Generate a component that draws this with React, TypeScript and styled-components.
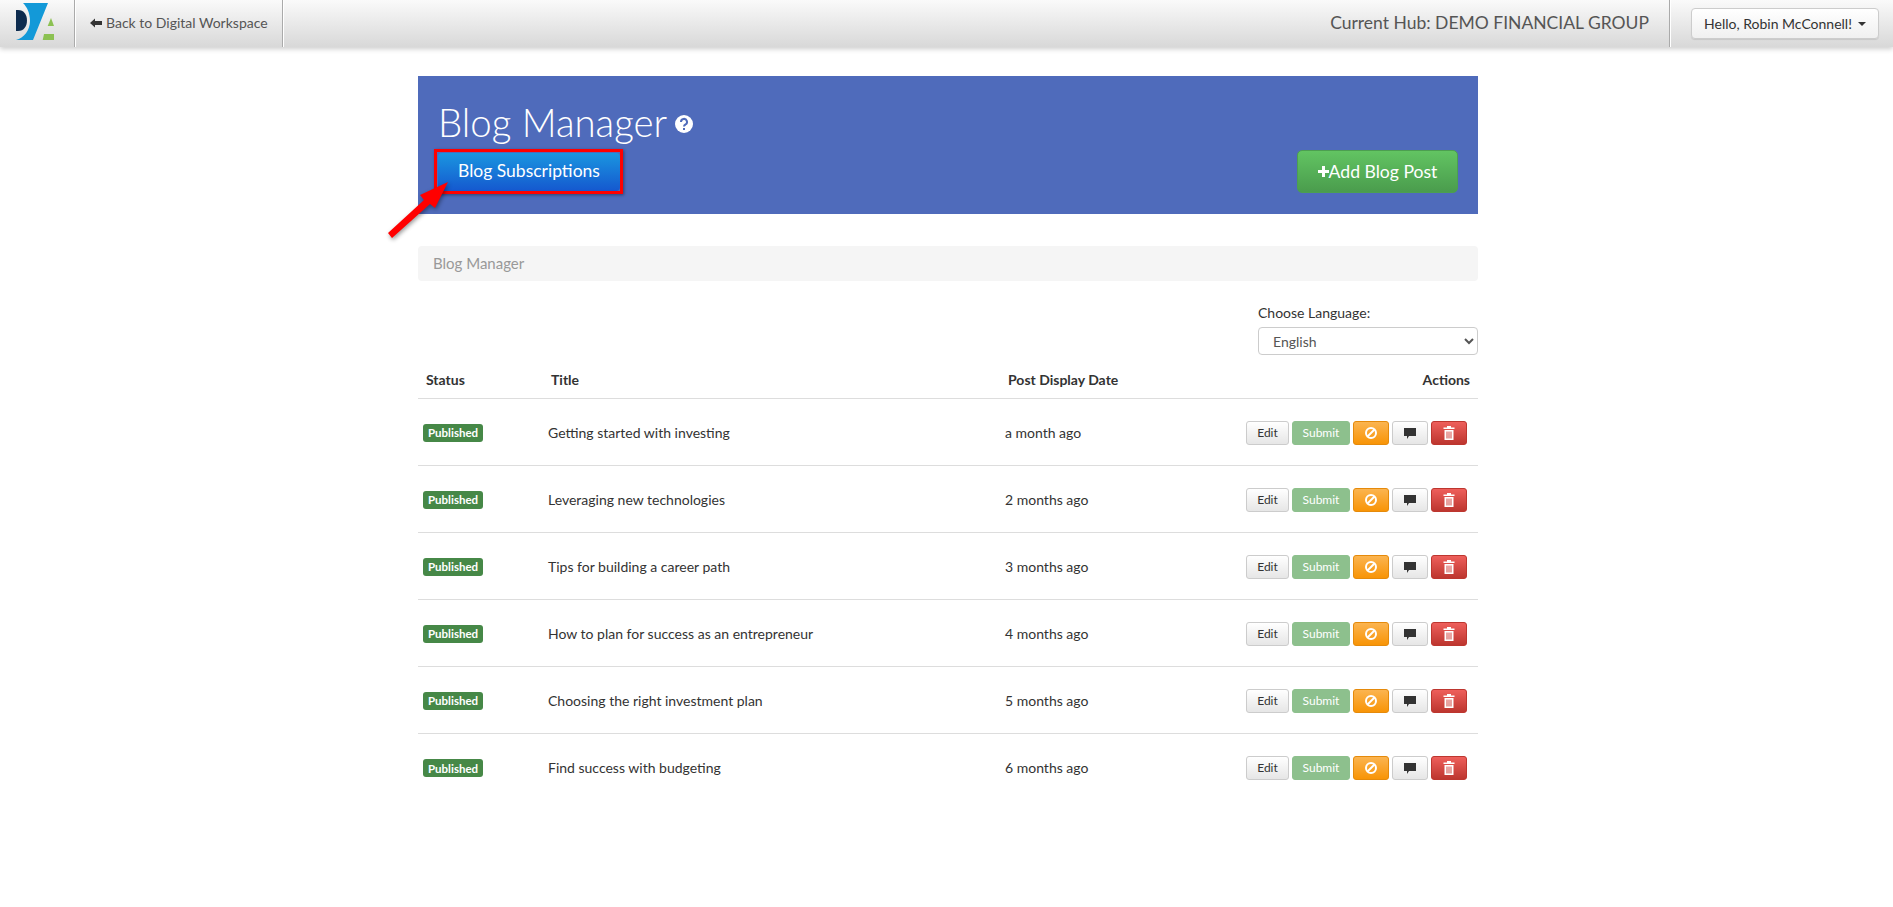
import styled, { createGlobalStyle } from "styled-components";

const GlobalStyle = createGlobalStyle`
  html, body {
    margin: 0;
    padding: 0;
    background: #fff;
    font-family: Lato, "Liberation Sans", sans-serif;
    color: #333;
  }
  * { box-sizing: border-box; }
`;

const TopBar = styled.header`
  height: 47px;
  display: flex;
  align-items: stretch;
  background: linear-gradient(to bottom, #fafafa, #d8d8d8);
  box-shadow: 0 2px 5px rgba(0, 0, 0, 0.2);
`;

const LogoCell = styled.div`
  width: 75px;
  padding: 3px 0 0 16px;
  border-right: 1px solid #aaa;
  box-shadow: 1px 0 0 #fff;
`;

const BackLink = styled.a`
  width: 208px;
  display: flex;
  align-items: center;
  gap: 4px;
  padding: 0 0 2px 15px;
  font-size: 14px;
  color: #555;
  border-right: 1px solid #aaa;
  box-shadow: 1px 0 0 #fff;
`;

const HubName = styled.div`
  margin-left: auto;
  display: flex;
  align-items: center;
  padding: 0 20px 3px 0;
  font-size: 17.5px;
  color: #555;
`;

const UserCell = styled.div`
  width: 224px;
  display: flex;
  align-items: flex-start;
  padding: 8px 0 0 21px;
  border-left: 1px solid #aaa;
  box-shadow: inset 1px 0 0 #fff;
`;

const UserButton = styled.button`
  width: 188px;
  height: 31px;
  display: flex;
  align-items: center;
  justify-content: center;
  gap: 6px;
  white-space: nowrap;
  font: 14px Lato, sans-serif;
  color: #333;
  background: linear-gradient(to bottom, #fff, #f0f0f0);
  border: 1px solid #ccc;
  border-radius: 4px;
  box-shadow: 0 1px 1px rgba(0, 0, 0, 0.1);
`;

const Caret = styled.span`
  width: 0;
  height: 0;
  border-left: 4px solid transparent;
  border-right: 4px solid transparent;
  border-top: 4px solid #333;
`;

const Main = styled.main`
  position: relative;
  width: 1060px;
  margin: 29px 0 0 418px;
`;

const Hero = styled.section`
  height: 138px;
  display: flex;
  justify-content: space-between;
  background: #4f6bbb;
  padding: 25px 20px 0 20px;
`;

const HeroLeft = styled.div`
  display: flex;
  flex-direction: column;
`;

const HeroTitle = styled.h1`
  margin: 0;
  display: flex;
  align-items: center;
  gap: 8px;
  font-size: 38.4px;
  line-height: 43px;
  font-weight: 300;
  color: #fff;
`;

const HelpIcon = styled.svg`
  width: 18px;
  height: 18px;
  margin-top: 2px;
`;

const SubscriptionsButton = styled.button`
  width: 182px;
  height: 38px;
  margin-top: 9px;
  padding: 0 0 4px;
  font: 17.5px Lato, sans-serif;
  color: #fff;
  background: linear-gradient(to bottom, #1a96e0, #1558cf);
  border: none;
  border-radius: 4px;
`;

const Highlight = styled.div`
  position: absolute;
  left: 16px;
  top: 73px;
  width: 189px;
  height: 45px;
  border: 3px solid #f00;
  box-shadow: 1px 1px 3px rgba(0, 0, 0, 0.4);
`;

const Arrow = styled.svg`
  position: absolute;
  left: -34px;
  top: 100px;
  width: 100px;
  height: 70px;
  overflow: visible;
  filter: drop-shadow(1px 2px 2px rgba(0, 0, 0, 0.4));
`;

const AddButton = styled.button`
  width: 161px;
  height: 43px;
  margin-top: 49px;
  font: 17.6px Lato, sans-serif;
  color: #fff;
  background: linear-gradient(to bottom, #62c462, #4a9c4d);
  border: 1px solid #4c9f50;
  border-radius: 5px;
  display: flex;
  align-items: center;
  justify-content: center;
`;

const Breadcrumb = styled.nav`
  height: 35px;
  margin-top: 32px;
  padding: 0 15px 2px;
  display: flex;
  align-items: center;
  font-size: 15px;
  color: #999;
  background: #f5f5f5;
  border-radius: 4px;
`;

const LanguageField = styled.div`
  width: 220px;
  margin: 22px 0 0 auto;
`;

const LanguageLabel = styled.label`
  display: block;
  font-size: 14px;
  line-height: 20px;
  margin-bottom: 4px;
  color: #333;
`;

const LanguageSelect = styled.select`
  width: 100%;
  height: 28px;
  padding: 0 10px;
  font: 14px Lato, sans-serif;
  color: #555;
  background: #fff;
  border: 1px solid #ccc;
  border-radius: 4px;
`;

const Table = styled.table`
  width: 100%;
  margin-top: 7px;
  border-collapse: collapse;
  table-layout: fixed;
  font-size: 14px;
`;

const Th = styled.th<{ $right?: boolean; $width?: number }>`
  height: 36px;
  padding: 0 8px;
  font-weight: 700;
  text-align: ${(p) => (p.$right ? "right" : "left")};
  width: ${(p) => (p.$width ? `${p.$width}px` : "auto")};
  border-bottom: 1px solid #ddd;
`;

const Row = styled.tr`
  height: 67px;
  & + & td { border-top: 1px solid #ddd; }
`;

const Td = styled.td`
  padding: 2px 5px 0;
  color: #333;
`;

const Badge = styled.span`
  display: inline-flex;
  align-items: center;
  height: 18px;
  padding: 0 5px;
  font-size: 11.5px;
  font-weight: 700;
  color: #fff;
  background: #468847;
  border-radius: 3px;
`;

const Actions = styled.div`
  display: flex;
  justify-content: flex-end;
  gap: 3px;
  padding-right: 6px;
`;

const variants = {
  plain: "background: linear-gradient(to bottom,#fff,#e6e6e6); border-color:#ccc; color:#333;",
  submit: "background:#8dc08d; border-color:#8dc08d; color:#fff;",
  warn: "background: linear-gradient(to bottom,#fbb450,#f89406); border-color:#e58a0b; color:#fff;",
  danger: "background: linear-gradient(to bottom,#ee5f5b,#bd362f); border-color:#bd362f; color:#fff;",
};

const ActionButton = styled.button<{ $variant: keyof typeof variants; $width: number }>`
  width: ${(p) => p.$width}px;
  height: 24px;
  padding: 0;
  display: flex;
  align-items: center;
  justify-content: center;
  font: 12px Lato, sans-serif;
  border: 1px solid;
  border-radius: 3px;
  ${(p) => variants[p.$variant]}
`;

const Glyph = styled.svg`
  width: 14px;
  height: 14px;
`;

const posts = [
  { title: "Getting started with investing", date: "a month ago" },
  { title: "Leveraging new technologies", date: "2 months ago" },
  { title: "Tips for building a career path", date: "3 months ago" },
  { title: "How to plan for success as an entrepreneur", date: "4 months ago" },
  { title: "Choosing the right investment plan", date: "5 months ago" },
  { title: "Find success with budgeting", date: "6 months ago" },
];

export default function App() {
  return (
    <>
      <GlobalStyle />
      <TopBar>
        <LogoCell>
          <svg width="40" height="38" viewBox="0 0 40 38">
            <path d="M0 7h2c6 0 9 5 9 10.500S8 28 2 28H0z" fill="#0d2b4e" />
            <path d="M7 0h25L17 37H0c8-2 14-10 14-19C14 10 11 4 7 0z" fill="#1399d8" />
            <path d="M35 15l-3.300 8H38z" fill="#8cc152" />
            <path d="M28 31h10v6H26.700z" fill="#8cc152" />
          </svg>
        </LogoCell>
        <BackLink>
          <svg width="12" height="10" viewBox="0 0 12 10">
            <path d="M0 5l5-4.500V3h7v4H5v2.500z" fill="#333" />
          </svg>
          Back to Digital Workspace
        </BackLink>
        <HubName>Current Hub: DEMO FINANCIAL GROUP</HubName>
        <UserCell>
          <UserButton>
            Hello, Robin McConnell! <Caret />
          </UserButton>
        </UserCell>
      </TopBar>
      <Main>
        <Hero>
          <HeroLeft>
            <HeroTitle>
              Blog Manager
              <HelpIcon viewBox="0 0 18 18">
                <circle cx="9" cy="9" r="9" fill="#fff" />
                <path d="M6 7a3 3 0 1 1 4.500 2.500C9.500 10 9 10.500 9 11.500" fill="none" stroke="#4f6bbb" strokeWidth="2" />
                <rect x="8" y="13" width="2" height="2" fill="#4f6bbb" />
              </HelpIcon>
            </HeroTitle>
            <SubscriptionsButton>Blog Subscriptions</SubscriptionsButton>
          </HeroLeft>
          <AddButton>
            <svg width="11" height="11" viewBox="0 0 11 11">
              <path d="M4 0h3v4h4v3H7v4H4V7H0V4h4z" fill="#fff" />
            </svg>
            Add Blog Post
          </AddButton>
        </Hero>
        <Highlight />
        <Arrow viewBox="0 0 100 70">
          <path d="M4 57L40 24l-4-5 28-13-13 26-5-4L8 62z" fill="#f00" />
        </Arrow>
        <Breadcrumb>Blog Manager</Breadcrumb>
        <LanguageField>
          <LanguageLabel>Choose Language:</LanguageLabel>
          <LanguageSelect defaultValue="English">
            <option>English</option>
          </LanguageSelect>
        </LanguageField>
        <Table>
          <thead>
            <tr>
              <Th $width={125}>Status</Th>
              <Th $width={457}>Title</Th>
              <Th $width={228}>Post Display Date</Th>
              <Th $right>Actions</Th>
            </tr>
          </thead>
          <tbody>
            {posts.map((post) => (
              <Row key={post.title}>
                <Td>
                  <Badge>Published</Badge>
                </Td>
                <Td>{post.title}</Td>
                <Td>{post.date}</Td>
                <Td>
                  <Actions>
                    <ActionButton $variant="plain" $width={43}>Edit</ActionButton>
                    <ActionButton $variant="submit" $width={58}>Submit</ActionButton>
                    <ActionButton $variant="warn" $width={36}>
                      <Glyph viewBox="0 0 14 14">
                        <circle cx="7" cy="7" r="5" fill="none" stroke="#fff" strokeWidth="2" />
                        <path d="M3.500 10.500l7-7" stroke="#fff" strokeWidth="2" />
                      </Glyph>
                    </ActionButton>
                    <ActionButton $variant="plain" $width={36}>
                      <Glyph viewBox="0 0 14 14">
                        <path d="M1 2h12v8H6l-2 3v-3H1z" fill="#333" />
                      </Glyph>
                    </ActionButton>
                    <ActionButton $variant="danger" $width={36}>
                      <Glyph viewBox="0 0 14 14">
                        <path d="M5 0h4v1.500h3.500V3h-11V1.500H5zM2.500 4h9v10h-9zM4.500 5.500v7h1v-7zM6.500 5.500v7h1v-7zM8.500 5.500v7h1v-7z" fill="#fff" fillRule="evenodd" />
                      </Glyph>
                    </ActionButton>
                  </Actions>
                </Td>
              </Row>
            ))}
          </tbody>
        </Table>
      </Main>
    </>
  );
}
